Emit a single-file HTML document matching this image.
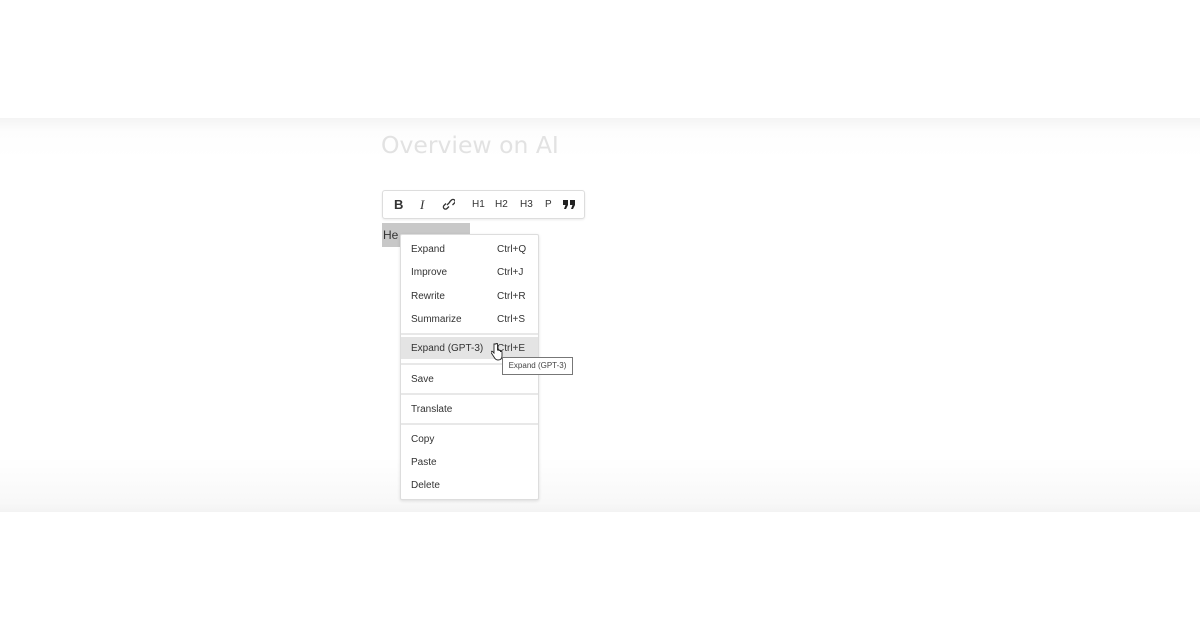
<!DOCTYPE html>
<html><head><style>
body{margin:0;width:1200px;height:630px;background:#fff;position:relative;overflow:hidden;font-family:"Liberation Sans",sans-serif}
.band{position:absolute;left:0;top:118px;width:1200px;height:394px;background:linear-gradient(#f4f4f4 0px,#fdfdfd 14px,#fff 40px,#fff 340px,#f8f8f8 385px,#f3f3f3 394px)}
.title{position:absolute;left:381px;top:131px;font-size:23.5px;color:#e2e2e2;font-family:"DejaVu Sans",sans-serif}
.tb{position:absolute;left:382px;top:190px;width:201px;height:27px;background:#fff;border:1px solid #ddd;border-radius:3px;box-shadow:0 1px 2px rgba(0,0,0,.08)}
.tb span{position:absolute;top:8px;font-size:10px;color:#333}
.sel{position:absolute;left:382px;top:223px;width:88px;height:24px;background:#c8c8c8}
.sel span{position:absolute;left:1px;top:5px;font-size:12px;color:#333}
.menu{position:absolute;left:400px;top:234px;width:137px;height:264px;background:#fff;border:1px solid #ddd;border-radius:2px;box-shadow:0 1px 3px rgba(0,0,0,.12)}
.it{position:absolute;left:0;width:137px;height:22px;font-size:10px;color:#333}
.it .l{position:absolute;left:10px;top:6px}
.it .r{position:absolute;left:96px;top:6px}
.sep{position:absolute;left:0;width:137px;height:2px;background:#e8e8e8}
.tip{position:absolute;left:502px;top:357px;width:69px;height:16px;border:1px solid #777;background:#fff;font-size:8px;color:#444;line-height:16px;text-align:center}
</style></head><body>
<div class="band"></div>
<div class="title">Overview on AI</div>
<div class="sel"><span>He</span></div>
<div class="tb">
<span style="left:11px;top:6px;font-size:13px;font-weight:bold">B</span>
<span style="left:37px;top:6px;font-size:13px;font-style:italic;font-family:'Liberation Serif',serif">I</span>
<svg style="position:absolute;left:58px;top:6px" width="14" height="14" viewBox="0 0 14 14" fill="none" stroke="#333" stroke-width="1.3"><path d="M6 8l3-3M5 6.5L3 8.5a2 2 0 003 3l2-2M8.5 5L10.5 3a2 2 0 013 3l-2 2"/></svg>
<span style="left:89px">H1</span><span style="left:112px">H2</span><span style="left:137px">H3</span><span style="left:162px">P</span>
<svg style="position:absolute;left:180px;top:9px" width="12" height="9" viewBox="0 0 12 9" fill="#222"><path d="M0 0h5v5l-2 4H1l1.5-4H0z M7 0h5v5l-2 4H8l1.5-4H7z"/></svg>
</div>
<div class="menu">
<div class="it" style="top:3px"><span class="l">Expand</span><span class="r">Ctrl+Q</span></div>
<div class="it" style="top:26px"><span class="l">Improve</span><span class="r">Ctrl+J</span></div>
<div class="it" style="top:50px"><span class="l">Rewrite</span><span class="r">Ctrl+R</span></div>
<div class="it" style="top:73px"><span class="l">Summarize</span><span class="r">Ctrl+S</span></div>
<div class="sep" style="top:98px"></div>
<div class="it" style="top:102px;background:#e4e4e4"><span class="l">Expand (GPT-3)</span><span class="r">Ctrl+E</span></div>
<div class="sep" style="top:128px"></div>
<div class="it" style="top:133px"><span class="l">Save</span></div>
<div class="sep" style="top:158px"></div>
<div class="it" style="top:163px"><span class="l">Translate</span></div>
<div class="sep" style="top:188px"></div>
<div class="it" style="top:193px"><span class="l">Copy</span></div>
<div class="it" style="top:216px"><span class="l">Paste</span></div>
<div class="it" style="top:239px"><span class="l">Delete</span></div>
</div>
<svg style="position:absolute;left:491px;top:343px" width="12" height="18" viewBox="0 0 12 18"><path d="M3 1v9l-1.5-1.5c-1-.8-2 .3-1.3 1.2L3 14c1 2 2 3 4 3s4-1 4-4V9c0-1-1.5-1-1.5 0V8c0-1-1.5-1-1.5 0V7.5c0-1-1.5-1-1.5 0V1c0-1-1.5-1-1.5 0z" fill="#fff" stroke="#222" stroke-width=".9"/></svg>
<div class="tip">Expand (GPT-3)</div>
</body></html>
